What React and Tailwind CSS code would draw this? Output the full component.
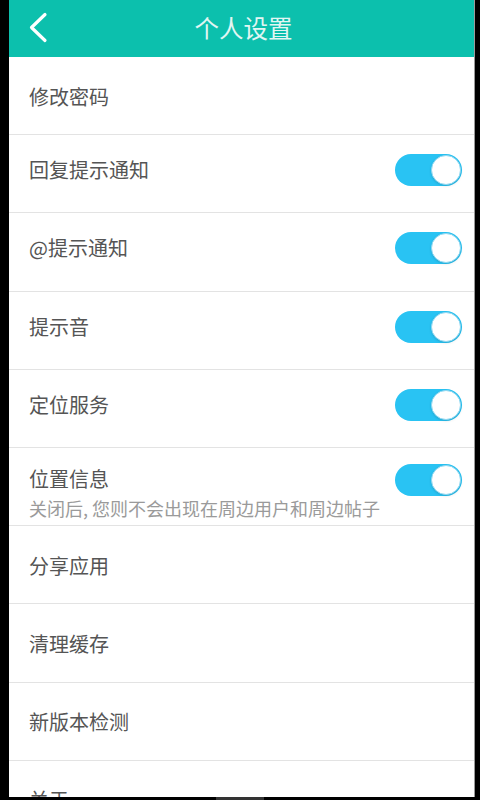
const rows = [
  { label: '修改密码' },
  { label: '回复提示通知', toggle: true },
  { label: '@提示通知', toggle: true },
  { label: '提示音', toggle: true },
  { label: '定位服务', toggle: true },
  { label: '位置信息', toggle: true, sub: '关闭后, 您则不会出现在周边用户和周边帖子' },
  { label: '分享应用' },
  { label: '清理缓存' },
  { label: '新版本检测' },
  { label: '关于' },
]

// iOS-style switch, always on in this screen
function Switch() {
  return (
    <div className="w-[67px] h-[32px] rounded-full bg-[#29c3f3] flex items-center justify-end pr-px shrink-0">
      <div className="w-[30px] h-[30px] rounded-full bg-white border border-[#8fd8f2] shadow-sm" />
    </div>
  )
}

function Row({ label, toggle, sub }) {
  if (sub) {
    return (
      <div className="h-[78.2px] border-b border-[#e3e3e3] flex items-start justify-between pl-5 pr-3 pt-4 shrink-0">
        <div className="flex flex-col">
          <span className="text-[20px] leading-[30px] text-[#555]">{label}</span>
          <span className="text-[18px] leading-[24px] text-[#9a9a9a] mt-[2px] whitespace-nowrap">{sub}</span>
        </div>
        <Switch />
      </div>
    )
  }
  return (
    <div
      className={
        toggle
          ? 'h-[78.2px] border-b border-[#e3e3e3] flex items-center justify-between pl-5 pr-3 pb-[7px] shrink-0'
          : 'h-[78.2px] border-b border-[#e3e3e3] flex items-center justify-between pl-5 pr-3 pt-[2px] shrink-0'
      }
    >
      <span className="text-[20px] leading-[30px] text-[#555]">{label}</span>
      {toggle && <Switch />}
    </div>
  )
}

export default function App() {
  return (
    <div
      className="w-[480px] h-[800px] bg-black flex flex-col overflow-hidden"
      style={{ fontFamily: '"Noto Sans CJK SC", "Noto Sans", sans-serif' }}
    >
      <div className="flex flex-1 min-h-0 pl-[9px] pr-[5px]">
        <div className="flex-1 flex flex-col bg-white overflow-hidden border-r border-[#9a9a9a]">
          <div className="h-[57px] bg-[#0cc0ad] flex items-center relative shrink-0">
            <svg className="absolute left-[19px] top-[12px]" width="20" height="32" viewBox="0 0 20 32" fill="none">
              <polyline points="17,2.5 3.5,15.5 17,28.5" stroke="white" strokeWidth="3.2" strokeLinecap="round" strokeLinejoin="round" />
            </svg>
            <div className="flex-1 text-center text-[24.5px] text-[#e2f6f3] pl-[4px]">个人设置</div>
          </div>
          {rows.map((r) => (
            <Row key={r.label} {...r} />
          ))}
        </div>
      </div>
      <div className="h-[3px] shrink-0 flex justify-center">
        <div className="w-[48px] h-[3px] bg-[#333]" />
      </div>
    </div>
  )
}
